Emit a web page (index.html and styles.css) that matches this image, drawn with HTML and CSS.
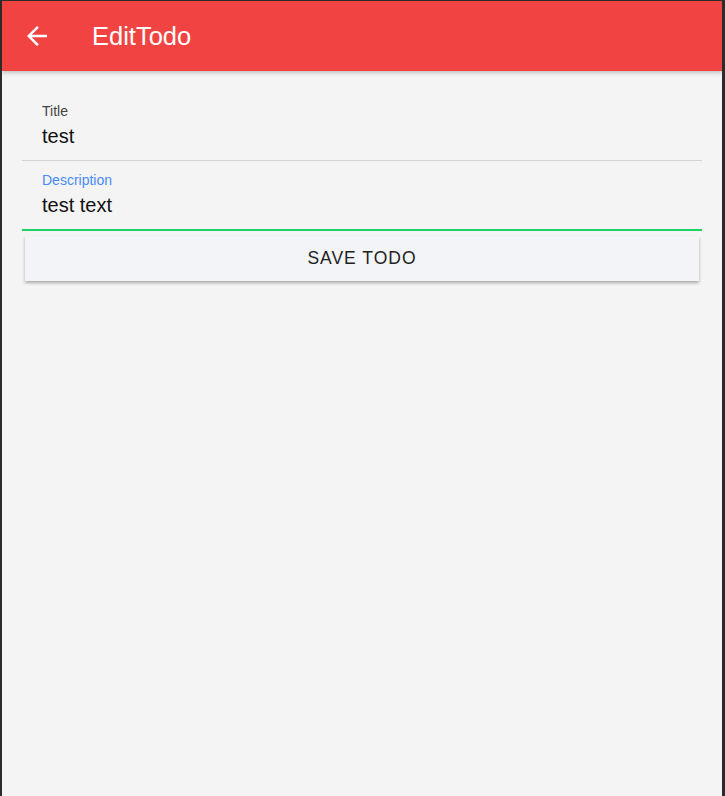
FILE: index.html
```html
<!DOCTYPE html>
<html>
<head>
<meta charset="utf-8">
<link rel="stylesheet" href="styles.css">
</head>
<body>
<div class="frame">
  <header class="appbar">
    <svg class="back" viewBox="0 0 24 24" width="30" height="30"><path fill="#fff" d="M20 11H7.83l5.59-5.59L12 4l-8 8 8 8 1.41-1.41L7.83 13H20v-2z"/></svg>
    <h1 class="title">EditTodo</h1>
  </header>
  <main class="content">
    <div class="field">
      <label class="label">Title</label>
      <div class="value">test</div>
    </div>
    <div class="field focused">
      <label class="label">Description</label>
      <div class="value">test text</div>
    </div>
    <button class="save">SAVE TODO</button>
  </main>
</div>
</body>
</html>
```
FILE: styles.css
```css
html, body {
  margin: 0;
  padding: 0;
  height: 100%;
  background: #2b2b2b;
}
.frame {
  box-sizing: border-box;
  height: 796px;
  margin: 1px 3px 0 2px;
  background: #f4f4f4;
  font-family: "Liberation Sans", Arial, sans-serif;
  overflow: hidden;
}
.appbar {
  height: 70px;
  background: #f24343;
  display: flex;
  align-items: center;
  box-shadow: 0 2px 4px rgba(0,0,0,0.2);
  position: relative;
}
.back {
  margin-left: 20px;
  display: block;
}
.title {
  margin: 0 0 0 40px;
  color: #fff;
  font-size: 25.5px;
  font-weight: normal;
  line-height: 28px;
}
.content {
  padding: 21px 20px 0 20px;
  display: flex;
  flex-direction: column;
}
.field {
  padding: 9px 20px 0 20px;
  height: 69px;
  box-sizing: border-box;
  border-bottom: 1px solid #d4d4d4;
}
.field.focused {
  height: 70px;
  border-bottom: 2px solid #1fd263;
}
.label {
  display: block;
  font-size: 14px;
  line-height: 16px;
  color: #444;
  margin-top: 2px;
}
.focused .label {
  color: #4a8af4;
}
.value {
  font-size: 20px;
  line-height: 24px;
  color: #111;
  margin-top: 5px;
}
.save {
  margin: 5px 3px 0 3px;
  height: 45px;
  border: none;
  background: #f3f4f7;
  box-shadow: 0 2px 3px rgba(0,0,0,0.3);
  font-family: "Liberation Sans", Arial, sans-serif;
  font-size: 17.5px;
  letter-spacing: 1px;
  color: #222;
  cursor: pointer;
}
```
